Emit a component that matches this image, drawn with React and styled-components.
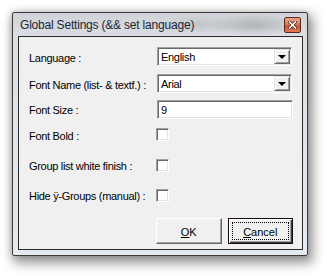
import React from "react";
import styled, { createGlobalStyle } from "styled-components";

const Global = createGlobalStyle`
  html, body { margin: 0; padding: 0; background: #ffffff; }
  body { width: 327px; height: 276px; overflow: hidden; }
  * { box-sizing: border-box; }
`;

const Stage = styled.div`
  padding: 12px 0 0 12px;
`;

const Window = styled.div`
  width: 296px;
  height: 244px;
  border: 1px solid #3a3a3a;
  border-radius: 2px;
  background: linear-gradient(180deg, #d0d3d7 0px, #dde1e6 30px, #e4eaf1 100%);
  box-shadow: 3px 5px 12px 2px rgba(0, 0, 0, 0.42), -1px 0 6px rgba(0, 0, 0, 0.15);
  padding: 0 4px 5px 5px;
  display: flex;
  flex-direction: column;
`;

const TitleBar = styled.div`
  height: 23px;
  display: flex;
  align-items: center;
  justify-content: space-between;
  padding: 0 2px 0 2px;
  background:
    radial-gradient(ellipse 45px 11px at 235px 12px, rgba(110, 110, 110, 0.35), transparent),
    radial-gradient(ellipse 40px 10px at 180px 12px, rgba(140, 140, 140, 0.25), transparent),
    transparent;
`;

const Title = styled.span`
  font-family: "Liberation Sans", Arial, sans-serif;
  font-size: 12px;
  letter-spacing: -0.2px;
  color: #1b2436;
  white-space: nowrap;
`;

const CloseButton = styled.div`
  width: 17px;
  height: 16px;
  border: 1px solid #5a2a20;
  border-radius: 2px;
  background: linear-gradient(180deg, #eaa58c 0%, #dc7455 50%, #c9502f 55%, #de7a57 100%);
  display: flex;
  align-items: center;
  justify-content: center;
  margin-top: 1px;
`;

const Client = styled.div`
  flex: 1;
  border: 1px solid #2b2b2b;
  background: #f0f0f0;
  padding: 10px 9px 0 10px;
  font-family: "Liberation Sans", Arial, sans-serif;
  font-size: 11px;
  letter-spacing: -0.3px;
  color: #000;
`;

const Row = styled.div`
  display: grid;
  grid-template-columns: 128px 135px;
  align-items: center;
  height: 19px;
  margin-top: ${(p) => p.$gap || 0}px;
`;

const Label = styled.span`
  white-space: nowrap;
  padding-top: ${(p) => (p.$low ? 3 : 1)}px;
`;

const Sunken = styled.div`
  height: 19px;
  background: #fff;
  border-top: 1px solid #a0a0a0;
  border-left: 1px solid #a0a0a0;
  border-bottom: 1px solid #ffffff;
  border-right: 1px solid #ffffff;
  box-shadow: inset 1px 1px 0 #696969, inset -1px -1px 0 #e3e3e3;
  display: flex;
  align-items: center;
  padding: 0 1px 0 3px;
  width: ${(p) => p.$w || 135}px;
`;

const Value = styled.span`
  flex: 1;
  white-space: nowrap;
  padding-top: 1px;
`;

const DropButton = styled.div`
  width: 16px;
  height: 15px;
  background: #f0f0f0;
  border-top: 1px solid #e3e3e3;
  border-left: 1px solid #e3e3e3;
  border-bottom: 1px solid #696969;
  border-right: 1px solid #696969;
  box-shadow: inset 1px 1px 0 #ffffff, inset -1px -1px 0 #a0a0a0;
  display: flex;
  align-items: center;
  justify-content: center;
`;

const Arrow = styled.div`
  width: 0;
  height: 0;
  border-left: 4px solid transparent;
  border-right: 4px solid transparent;
  border-top: 4px solid #000;
  margin-top: 1px;
`;

const Check = styled.div`
  width: 13px;
  height: 13px;
  background: #fff;
  border-top: 1px solid #a0a0a0;
  border-left: 1px solid #a0a0a0;
  border-bottom: 1px solid #ffffff;
  border-right: 1px solid #ffffff;
  box-shadow: inset 1px 1px 0 #696969, inset -1px -1px 0 #e3e3e3;
  margin-left: -1px;
`;

const ButtonRow = styled.div`
  display: flex;
  gap: 6px;
  margin: 13px 0 0 127px;
`;

const Button = styled.div`
  width: 66px;
  height: 26px;
  background: #f0f0f0;
  border: 1px solid;
  border-color: ${(p) =>
    p.$default ? "#1a0a0a" : "#ffffff #696969 #696969 #ffffff"};
  box-shadow: ${(p) =>
    p.$default
      ? "inset 1px 1px 0 #ffffff, inset -1px -1px 0 #404040, inset -2px -2px 0 #a0a0a0"
      : "inset -1px -1px 0 #a0a0a0"};
  display: flex;
  align-items: center;
  justify-content: center;
  padding: 3px;
`;

const Focus = styled.div`
  flex: 1;
  align-self: stretch;
  display: flex;
  align-items: center;
  justify-content: center;
  border: 1px dotted ${(p) => (p.$on ? "#000" : "transparent")};
  font-size: 11px;
  letter-spacing: 0;
  padding-top: 1px;
`;

const U = styled.span`
  text-decoration: underline;
`;

function Combo({ value }) {
  return (
    <Sunken>
      <Value>{value}</Value>
      <DropButton>
        <Arrow />
      </DropButton>
    </Sunken>
  );
}

export default function App() {
  return (
    <>
      <Global />
      <Stage>
        <Window>
          <TitleBar>
            <Title>Global Settings (&amp;&amp; set language)</Title>
            <CloseButton>
              <svg width="9" height="8" viewBox="0 0 9 8">
                <path d="M1.5 1 L7.5 7 M7.5 1 L1.5 7" stroke="#3a1a12" strokeWidth="3" strokeLinecap="square" />
                <path d="M1.5 1 L7.5 7 M7.5 1 L1.5 7" stroke="#ffffff" strokeWidth="1.6" strokeLinecap="square" />
              </svg>
            </CloseButton>
          </TitleBar>
          <Client>
            <Row>
              <Label $low>Language :</Label>
              <Combo value="English" />
            </Row>
            <Row $gap={8}>
              <Label $low>Font Name (list- &amp; textf.) :</Label>
              <Combo value="Arial" />
            </Row>
            <Row $gap={7}>
              <Label>Font Size :</Label>
              <Sunken $w={136}>
                <Value>9</Value>
              </Sunken>
            </Row>
            <Row $gap={6}>
              <Label $low>Font Bold :</Label>
              <Check />
            </Row>
            <Row $gap={12}>
              <Label>Group list white finish :</Label>
              <Check />
            </Row>
            <Row $gap={11}>
              <Label>Hide ÿ-Groups (manual) :</Label>
              <Check />
            </Row>
            <ButtonRow>
              <Button>
                <Focus>
                  <U>O</U>K
                </Focus>
              </Button>
              <Button $default>
                <Focus $on>
                  <U>C</U>ancel
                </Focus>
              </Button>
            </ButtonRow>
          </Client>
        </Window>
      </Stage>
    </>
  );
}
